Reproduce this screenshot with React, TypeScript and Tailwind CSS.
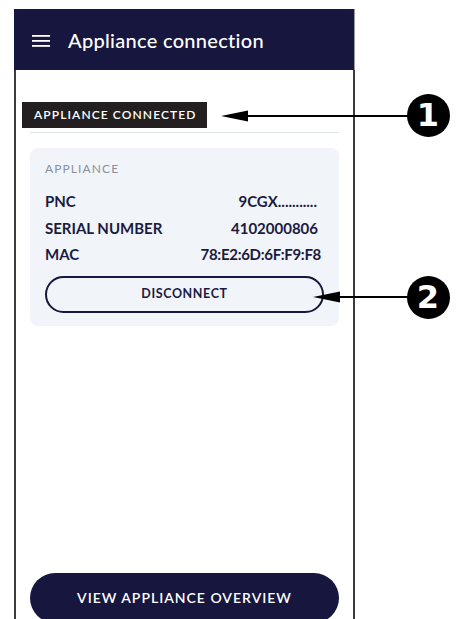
import React from "react";

function Arrow({ left, top, width }: { left: number; top: number; width: number }) {
  return (
    <svg
      className="absolute"
      style={{ left, top: top - 8 }}
      width={width}
      height={16}
      viewBox={`0 0 ${width} 16`}
    >
      <line x1={20} y1={8} x2={width} y2={8} stroke="#000" strokeWidth={2} />
      <polygon points={`0,8 27,2.5 27,13.5`} fill="#000" />
    </svg>
  );
}

function Badge({ n, cx, cy }: { n: string; cx: number; cy: number }) {
  return (
    <div
      className="absolute flex items-center justify-center rounded-full bg-black text-white w-[43px] h-[43px] text-[32px] font-black leading-none"
      style={{ left: cx - 21.5, top: cy - 21.5, fontFamily: "'DejaVu Sans', sans-serif" }}
    >
      {n}
    </div>
  );
}

export default function App() {
  const font = { fontFamily: "Lato, 'Noto Sans', sans-serif" };
  return (
    <div className="relative w-[459px] h-[619px] bg-white overflow-hidden" style={font}>
      <div className="ml-[14px] mt-[9px] w-[341px] flex flex-col">
        <div className="h-[61px] bg-[#16163e] flex items-center pl-[18px] border-r border-[#9a9a9a]">
          <svg width="18" height="12" viewBox="0 0 18 12" className="mr-[18px] mt-[2px]">
            <rect x="0" y="0" width="18" height="1.8" fill="#fff" />
            <rect x="0" y="5" width="18" height="1.8" fill="#fff" />
            <rect x="0" y="10" width="18" height="1.8" fill="#fff" />
          </svg>
          <span className="text-white text-[20px] font-medium tracking-[0.3px]">Appliance connection</span>
        </div>
        <div className="h-[553px] flex flex-col border-l-2 border-r-2 border-[#3c3c3c] px-[14px]">
          <div className="mt-[32px] ml-[-8px] self-start h-[26px] bg-[#231f20] text-white text-[12px] font-semibold tracking-[1.1px] flex items-center pl-[12px] w-[185px]">
            APPLIANCE CONNECTED
          </div>
          <div className="mt-[4px] h-px bg-[#dfe5ea]" />
          <div className="mt-[15px] rounded-[8px] bg-[#f1f4f8] px-[15px] pt-[13px] pb-[13px] flex flex-col">
            <div className="text-[12px] text-[#8b90a0] tracking-[1.1px] leading-[16px]">APPLIANCE</div>
            <div className="mt-[15px] flex flex-col gap-[8.5px] text-[15px] font-bold text-[#1b1b3f] leading-[18px] pr-[3px]">
              <div className="flex justify-between">
                <span>PNC</span>
                <span className="pr-[4px]">9CGX...........</span>
              </div>
              <div className="flex justify-between">
                <span>SERIAL NUMBER</span>
                <span className="pr-[3px]">4102000806</span>
              </div>
              <div className="flex justify-between">
                <span>MAC</span>
                <span className="tracking-[-0.3px]">78:E2:6D:6F:F9:F8</span>
              </div>
            </div>
            <div className="mt-[13px] h-[37px] rounded-full border-2 border-[#16163e] flex items-center justify-center text-[12.5px] font-bold text-[#1b1b3f] tracking-[0.6px]">
              DISCONNECT
            </div>
          </div>
          <div className="mt-auto h-[50px] rounded-full bg-[#16163e] flex items-center justify-center text-white text-[14px] font-semibold tracking-[1px] pb-[2px]">
            VIEW APPLIANCE OVERVIEW
          </div>
        </div>
      </div>

      <Arrow left={221} top={116} width={190} />
      <Arrow left={313} top={297} width={98} />
      <Badge n="1" cx={428} cy={115} />
      <Badge n="2" cx={428} cy={297} />
    </div>
  );
}
